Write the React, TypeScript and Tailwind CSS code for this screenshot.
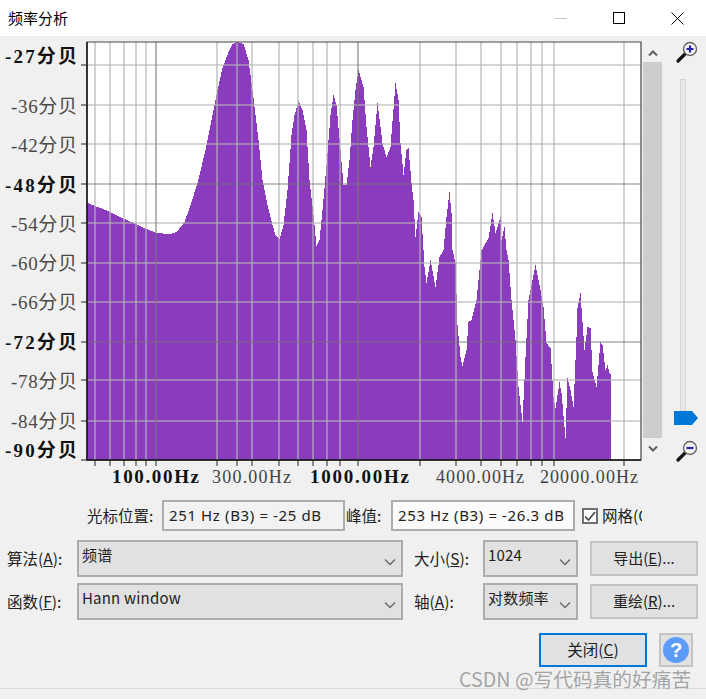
import React from "react";

const vLines = [95, 110, 124, 136, 146, 217, 237, 252, 279, 298, 313, 327, 340, 420, 456, 481, 501, 517, 531, 542, 554, 624];
const vDark = [156, 358];
const hLines = [65, 105, 144, 223, 263, 302, 380, 421];
const hDark = [184, 342];

const yLabels = [
  { text: "-27分贝", y: 55, bold: true },
  { text: "-36分贝", y: 105 },
  { text: "-42分贝", y: 144 },
  { text: "-48分贝", y: 184, bold: true },
  { text: "-54分贝", y: 223 },
  { text: "-60分贝", y: 262 },
  { text: "-66分贝", y: 301 },
  { text: "-72分贝", y: 341, bold: true },
  { text: "-78分贝", y: 380 },
  { text: "-84分贝", y: 420 },
  { text: "-90分贝", y: 449, bold: true },
];

const xLabels = [
  { text: "100.00Hz", x: 112, w: 87, bold: true },
  { text: "300.00Hz", x: 212, w: 79 },
  { text: "1000.00Hz", x: 310, w: 99, bold: true },
  { text: "4000.00Hz", x: 436, w: 88 },
  { text: "20000.00Hz", x: 540, w: 98 },
];

// outline of the spectrum, read off the picture
const spectrum: [number, number][] = [
  [87, 203], [110, 212], [124, 219], [136, 224], [146, 229], [156, 233], [170, 234], [176, 232], [184, 222],
  [190, 205], [197, 183], [205, 150], [210, 125], [217, 90], [222, 68], [228, 52], [232, 44], [237, 42],
  [243, 44], [248, 60], [252, 90], [255, 115], [258, 140], [262, 180], [267, 205], [272, 225], [275, 235],
  [279, 239], [283, 225], [287, 190], [291, 135], [294, 115], [298, 101], [302, 110], [306, 130], [309, 180],
  [313, 215], [316, 246], [319, 240], [322, 210], [326, 165], [330, 115], [333, 95], [336, 105], [340, 150],
  [343, 185], [346, 185], [349, 160], [352, 120], [355, 90], [358, 70], [363, 87], [366, 127], [370, 167],
  [373, 147], [377, 103], [382, 143], [386, 157], [390, 147], [395, 83], [398, 100], [400, 143], [403, 175],
  [406, 150], [408, 148], [411, 183], [413, 200], [415, 237], [418, 212], [421, 217], [423, 250], [424, 267],
  [426, 283], [430, 260], [435, 287], [439, 257], [443, 250], [446, 217], [449, 192], [451, 213], [452, 250],
  [455, 263], [457, 325], [460, 357], [462, 366], [466, 350], [468, 322], [471, 320], [476, 300], [481, 250],
  [483, 247], [488, 238], [492, 213], [495, 233], [500, 217], [501, 240], [504, 227], [506, 250], [508, 260],
  [511, 300], [515, 340], [518, 387], [522, 422], [525, 357], [528, 300], [535, 265], [540, 290], [543, 307],
  [546, 343], [550, 348], [553, 397], [555, 408], [559, 382], [561, 393], [565, 438], [567, 378], [570, 390],
  [573, 407], [576, 337], [577, 308], [580, 293], [581, 308], [584, 350], [587, 327], [590, 328], [592, 372],
  [596, 387], [600, 342], [602, 345], [605, 370], [607, 365], [609, 373], [610, 374],
];

function spectrumPath() {
  let d = "M87 460";
  let i = 0;
  for (let x = 87; x <= 610; x++) {
    while (i < spectrum.length - 2 && spectrum[i + 1][0] < x) i++;
    const [x0, y0] = spectrum[i];
    const [x1, y1] = spectrum[i + 1];
    const y = Math.round(y0 + ((x - x0) / (x1 - x0)) * (y1 - y0));
    d += ` V${y} H${x + 1}`;
  }
  return d + " V460 Z";
}

function Plot() {
  return (
    <svg width={643} height={454} viewBox="0 36 643 454" className="block shrink-0">
      <rect x={87} y={42} width={554} height={418} fill="#ffffff" />
      <path d={spectrumPath()} fill="#8b3bbd" shapeRendering="crispEdges" />
      {hLines.map((y) => (
        <line key={y} x1={87} x2={641} y1={y} y2={y} stroke="#b4b4b4" strokeOpacity={0.75} strokeWidth={1.6} />
      ))}
      {vLines.map((x) => (
        <line key={x} x1={x} x2={x} y1={42} y2={460} stroke="#b4b4b4" strokeOpacity={0.75} strokeWidth={1.6} />
      ))}
      {hDark.map((y) => (
        <line key={y} x1={87} x2={641} y1={y} y2={y} stroke="#777777" strokeOpacity={0.9} strokeWidth={1.2} />
      ))}
      {vDark.map((x) => (
        <line key={x} x1={x} x2={x} y1={42} y2={460} stroke="#777777" strokeOpacity={0.9} strokeWidth={1.2} />
      ))}
      <path d="M87 460 V42 H641 V460 Z" fill="none" stroke="#444444" strokeWidth={1.2} />
      <path d="M87 42 V460 H641" fill="none" stroke="#111111" strokeWidth={1.4} />
      {[...hLines, ...hDark, 460].map((y) => (
        <line key={y} x1={81} x2={87} y1={y} y2={y} stroke="#222222" />
      ))}
      {[...vLines, ...vDark].map((x) => (
        <line key={x} x1={x} x2={x} y1={460} y2={466} stroke="#222222" />
      ))}
      {yLabels.map((l) => (
        <text
          key={l.text}
          x={l.bold ? 5 : 11}
          y={l.y + 7.5}
          fontSize={19}
          fontWeight={l.bold ? 700 : 400}
          fill={l.bold ? "#111111" : "#4a4a4a"}
          textLength={l.bold ? 72 : 66}
          lengthAdjust="spacing"
          fontFamily="'Liberation Serif','Noto Sans CJK SC',serif"
        >
          {l.text}
        </text>
      ))}
      {xLabels.map((l) => (
        <text
          key={l.text}
          x={l.x}
          y={483}
          fontSize={l.bold ? 19 : 18}
          fontWeight={l.bold ? 700 : 400}
          fill={l.bold ? "#111111" : "#444444"}
          textLength={l.w}
          lengthAdjust="spacing"
          fontFamily="'Liberation Serif',serif"
        >
          {l.text}
        </text>
      ))}
    </svg>
  );
}

function Chevron({ up }: { up?: boolean }) {
  return (
    <svg width={12} height={8} viewBox="0 0 12 8">
      <path d={up ? "M2 6.5 L6 2.5 L10 6.5" : "M2 1.5 L6 5.5 L10 1.5"} fill="none" stroke="#606060" strokeWidth={2} />
    </svg>
  );
}

function Magnifier({ minus }: { minus?: boolean }) {
  return (
    <svg width={24} height={24} viewBox="0 0 24 24">
      <path d="M3 21 L11 13" stroke="#111111" strokeWidth={3.2} strokeLinecap="round" />
      <circle cx={15} cy={9} r={6.5} fill="#f4f4f4" stroke="#666666" strokeWidth={1.4} />
      <path d={minus ? "M11.5 9 H18.5" : "M11.5 9 H18.5 M15 5.5 V12.5"} stroke="#2222aa" strokeWidth={2.2} />
    </svg>
  );
}

function Select({ label, width }: { label: string; width: string }) {
  return (
    <div className={`relative h-[37px] shrink-0 border-2 border-[#adadad] bg-[#e1e1e1] pl-[3px] pt-[1px] text-[15px] leading-[24px] tracking-[0.2px] text-[#222222] ${width}`}>
      {label}
      <span className="absolute right-[5px] top-[16px] flex">
        <svg width={12} height={8} viewBox="0 0 12 8">
          <path d="M1 1.5 L6 6.5 L11 1.5" fill="none" stroke="#666666" strokeWidth={1.3} />
        </svg>
      </span>
    </div>
  );
}

function PlainButton({ children }: { children: React.ReactNode }) {
  return (
    <div className="ml-[12px] flex h-[35px] w-[108px] shrink-0 items-center justify-center border-2 border-[#c4c4c4] bg-[#e1e1e1] text-[15px] text-[#222222]">
      {children}
    </div>
  );
}

export default function App() {
  return (
    <div className="relative h-[699px] w-[706px] overflow-hidden bg-[#f0f0f0] font-['Noto_Sans_CJK_SC',sans-serif] text-[15.5px] text-[#222222]">
      {/* Title bar */}
      <header className="flex h-[36px] items-center justify-between bg-white pl-[8px]">
        <span className="text-[15px] text-black">频率分析</span>
        <div className="flex h-full items-center">
          <div className="flex w-[58px] justify-center">
            <div className="h-px w-[12px] bg-[#c4c4c4]" />
          </div>
          <div className="flex w-[58px] justify-center">
            <div className="size-[12px] border border-black" />
          </div>
          <div className="flex w-[58px] justify-center">
            <svg width={13} height={13} viewBox="0 0 13 13">
              <path d="M0.5 0.5 L12.5 12.5 M12.5 0.5 L0.5 12.5" stroke="#000000" strokeWidth={1} />
            </svg>
          </div>
        </div>
      </header>

      {/* Plot, scrollbar, zoom slider */}
      <div className="flex h-[454px]">
        <Plot />
        <div className="flex w-[19px] shrink-0 flex-col pt-[8px]">
          <div className="flex h-[18px] items-center justify-center">
            <Chevron up />
          </div>
          <div className="h-[376px] bg-[#cdcdcd]" />
          <div className="flex h-[22px] items-center justify-center">
            <Chevron />
          </div>
        </div>
        <div className="relative flex flex-1 flex-col items-center pt-[4px]">
          <div className="translate-x-[3px]">
            <Magnifier />
          </div>
          <div className="mt-[15px] h-[332px] w-[6px] translate-x-[-1px] border border-[#d6d6d6] bg-[#e7e7e7]" />
          <svg width={24} height={14} viewBox="0 0 24 14" className="absolute left-[12px] top-[375px]">
            <path d="M0 0 H18 L24 7 L18 14 H0 Z" fill="#0078d7" />
          </svg>
          <div className="absolute left-[13px] top-[403px]">
            <Magnifier minus />
          </div>
        </div>
      </div>

      {/* Readouts */}
      <div className="mt-[10px] flex h-[31px] items-center pl-[87px]">
        <span className="w-[75px] shrink-0">光标位置:</span>
        <div className="flex h-full w-[183px] shrink-0 items-center border-2 border-[#adadad] bg-[#f2f2f2] pl-[5px] font-['Noto_Sans',sans-serif] text-[15px] tracking-[0.62px]">
          251 Hz (B3) = -25 dB
        </div>
        <span className="ml-px w-[45px] shrink-0">峰值:</span>
        <div className="flex h-full w-[184px] shrink-0 items-center border-2 border-[#adadad] bg-[#fbfbfb] pl-[5px] font-['Noto_Sans',sans-serif] text-[15px] tracking-[0.62px]">
          253 Hz (B3) = -26.3 dB
        </div>
        <div className="ml-[7px] flex size-[16px] shrink-0 items-center justify-center border-2 border-[#707070] bg-white">
          <svg width={12} height={12} viewBox="0 0 12 12">
            <path d="M1 6.5 L4.5 10 L11 2" fill="none" stroke="#444444" strokeWidth={1.6} />
          </svg>
        </div>
        <span className="ml-[4px] w-[40px] shrink-0 overflow-hidden whitespace-nowrap">网格(G)</span>
      </div>

      {/* Algorithm / size / export */}
      <div className="mt-[9px] flex items-center">
        <span className="w-[77px] shrink-0 pl-[7px]">
          算法(<u>A</u>):
        </span>
        <Select label="频谱" width="w-[326px]" />
        <span className="w-[80px] shrink-0 pl-[11px]">
          大小(<u>S</u>):
        </span>
        <Select label="1024" width="w-[95px]" />
        <PlainButton>
          导出(<u>E</u>)...
        </PlainButton>
      </div>

      {/* Function / axis / replot */}
      <div className="mt-[6px] flex items-center">
        <span className="w-[77px] shrink-0 pl-[7px]">
          函数(<u>F</u>):
        </span>
        <Select label="Hann window" width="w-[326px]" />
        <span className="w-[80px] shrink-0 pl-[11px]">
          轴(<u>A</u>):
        </span>
        <Select label="对数频率" width="w-[95px]" />
        <PlainButton>
          重绘(<u>R</u>)...
        </PlainButton>
      </div>

      {/* Close / help */}
      <div className="mt-[13px] flex h-[34px] items-center pl-[539px]">
        <div className="flex h-[34px] w-[108px] shrink-0 items-center justify-center border-2 border-[#0078d7] bg-[#e1e1e1]">
          关闭(<u>C</u>)
        </div>
        <div className="ml-[12px] flex h-[34px] w-[34px] shrink-0 items-center justify-center border-2 border-[#c4c4c4] bg-[#e1e1e1]">
          <div className="flex size-[26px] items-center justify-center rounded-full bg-[#5c9cf8] font-['Liberation_Sans',sans-serif] text-[20px] font-bold text-white">
            ?
          </div>
        </div>
      </div>

      <div className="mt-[21px] h-px bg-[#dcdcdc]" />

      {/* Watermark */}
      <span className="absolute left-[459px] top-[666px] text-[19.7px] leading-[26px] whitespace-nowrap text-[#9a9a9a]/90">
        CSDN @写代码真的好痛苦
      </span>
    </div>
  );
}
